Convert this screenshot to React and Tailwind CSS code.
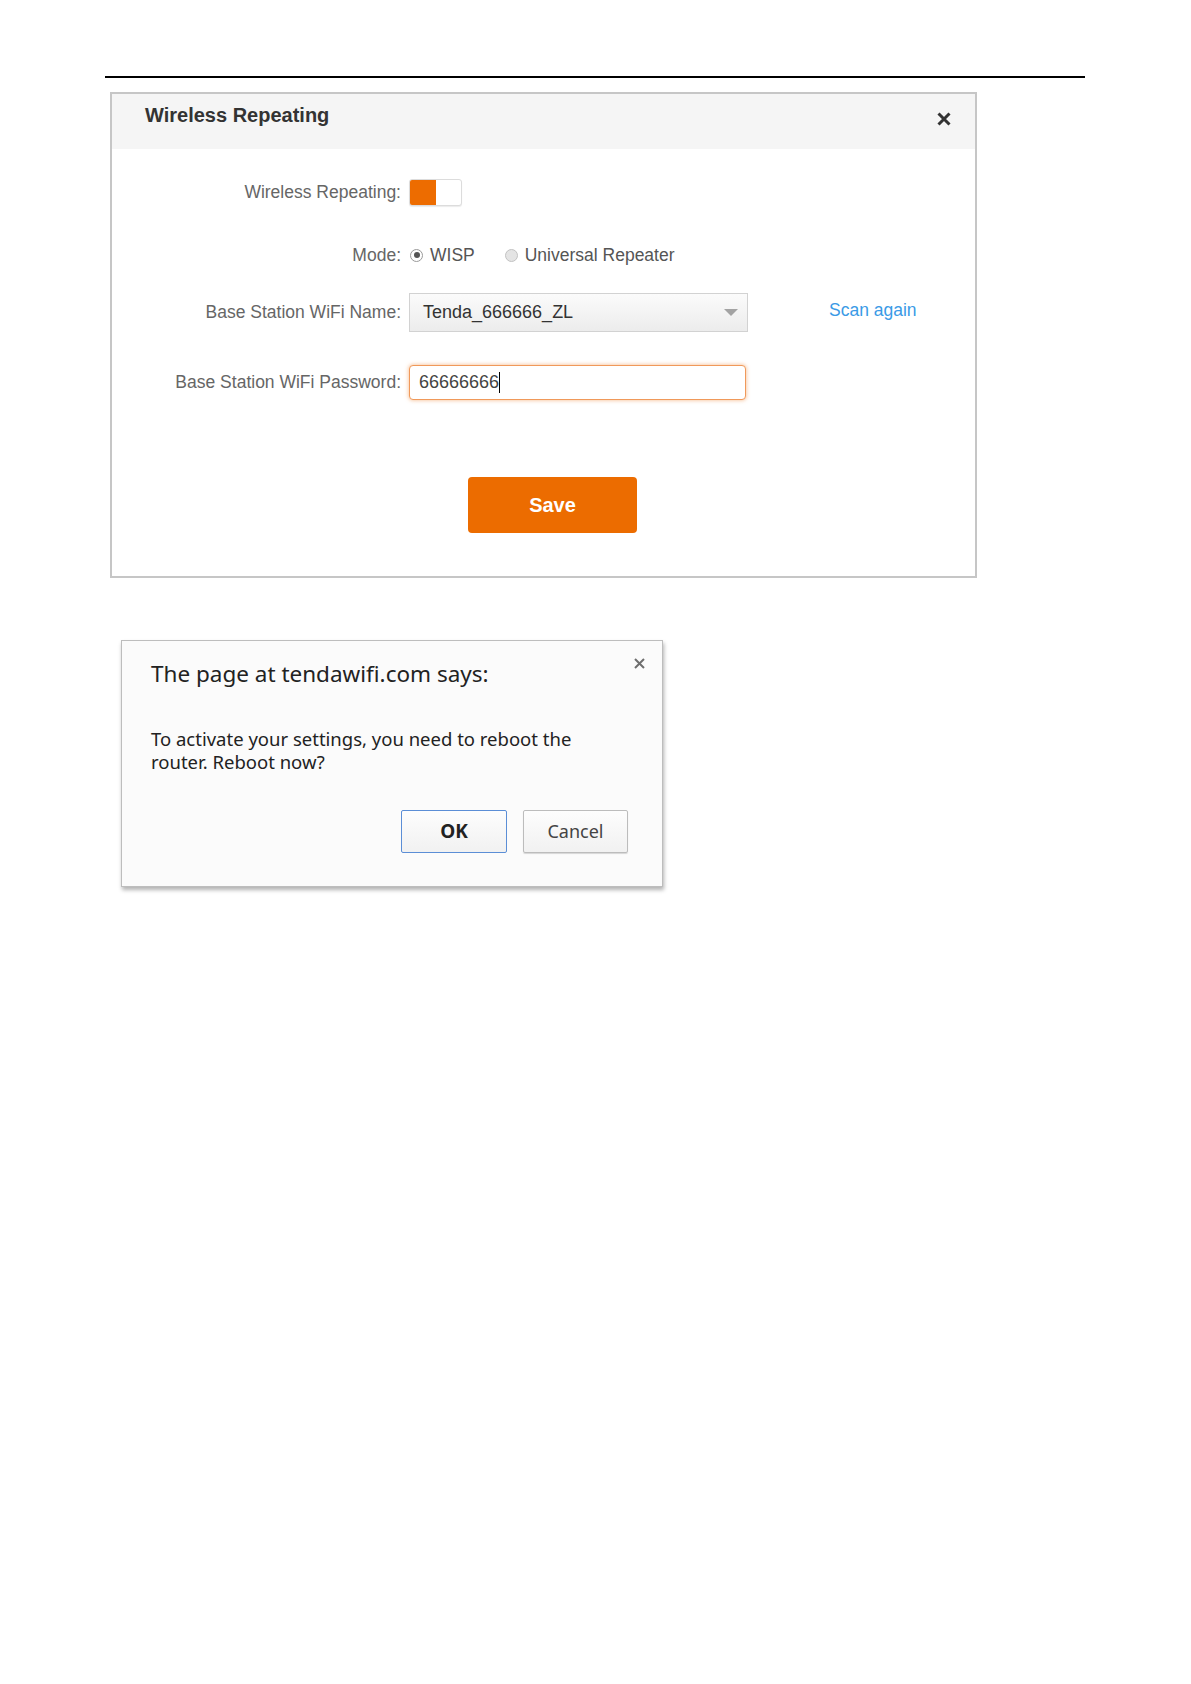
export default function App() {
  const arial = { fontFamily: '"Liberation Sans", Arial, sans-serif' };
  return (
    <div className="w-[1191px] min-h-[1684px] bg-white" style={arial}>
      <div className="pt-[76px] pl-[105px]">
        <div className="w-[980px] h-[2px] bg-black" />

        {/* Wireless Repeating panel */}
        <div className="ml-[5px] mt-[14px] w-[867px] border-2 border-[#c6c6c6] bg-white">
          <div className="h-[55px] bg-[#f5f5f5] pl-[33px] pr-[24px] pt-[9px] flex justify-between items-start">
            <div className="text-[20px] leading-[24px] font-bold text-[#333]">Wireless Repeating</div>
            <svg className="mt-[9px]" width="14" height="14" viewBox="0 0 14 14">
              <path d="M1.5 1.5 L12.5 12.5 M12.5 1.5 L1.5 12.5" stroke="#333" strokeWidth="3" strokeLinecap="butt" />
            </svg>
          </div>

          <div className="flex flex-col pb-[43px]">
            {/* Row 1 */}
            <div className="mt-[30px] h-[27px] flex items-center">
              <div className="w-[289px] text-right text-[17.5px] text-[#666]">Wireless Repeating:</div>
              <div className="ml-[8px] w-[53px] h-[27px] rounded-[3px] border border-[#dcdcdc] bg-white flex overflow-hidden shadow-[0_1px_1px_rgba(0,0,0,0.08)]">
                <div className="w-[26px] h-full bg-[#ed6c00]" />
              </div>
            </div>

            {/* Row 2 */}
            <div className="mt-[36px] h-[26px] flex items-center">
              <div className="w-[289px] text-right text-[17.5px] text-[#666]">Mode:</div>
              <div className="ml-[9px] w-[13px] h-[13px] rounded-full border border-[#9a9a9a] bg-white flex items-center justify-center">
                <div className="w-[6px] h-[6px] rounded-full bg-[#555]" />
              </div>
              <div className="ml-[7px] text-[17.5px] text-[#555]">WISP</div>
              <div className="ml-[30px] w-[13px] h-[13px] rounded-full border border-[#c2c2c2] bg-[#e4e4e4]" />
              <div className="ml-[7px] text-[17.5px] text-[#555]">Universal Repeater</div>
            </div>

            {/* Row 3 */}
            <div className="mt-[25px] h-[39px] flex items-center">
              <div className="w-[289px] text-right text-[17.5px] text-[#666]">Base Station WiFi Name:</div>
              <div className="ml-[8px] w-[339px] h-[39px] border border-[#d2d2d2] bg-gradient-to-b from-[#fbfbfb] to-[#ececec] flex items-center justify-between pl-[13px] pr-[9px]">
                <span className="text-[18px] text-[#333]">Tenda_666666_ZL</span>
                <svg width="14" height="7" viewBox="0 0 14 7">
                  <path d="M0 0 L14 0 L7 7 Z" fill="#a3a3a3" />
                </svg>
              </div>
              <div className="ml-[81px] -mt-[4px] text-[17.5px] text-[#3a9ae6]">Scan again</div>
            </div>

            {/* Row 4 */}
            <div className="mt-[33px] h-[35px] flex items-center">
              <div className="w-[289px] text-right text-[17.5px] text-[#666]">Base Station WiFi Password:</div>
              <div className="ml-[8px] w-[337px] h-[35px] rounded-[4px] border border-[#f0995a] shadow-[0_0_4px_rgba(237,120,30,0.55)] bg-white flex items-center pl-[9px]">
                <span className="text-[18px] text-[#444]">66666666</span>
                <span className="w-px h-[21px] bg-black" />
              </div>
            </div>

            {/* Save */}
            <div className="mt-[77px] ml-[356px] w-[169px] h-[56px] rounded-[4px] bg-[#ec6c00] flex items-center justify-center text-white font-bold text-[20px]">
              Save
            </div>
          </div>
        </div>

        {/* Browser dialog */}
        <div
          className="ml-[16px] mt-[62px] w-[542px] border border-[#bdbdbd] bg-[#fbfbfb] shadow-[1px_3px_4px_rgba(0,0,0,0.3)] pl-[29px] pr-[34px] pt-[19px] pb-[33px] flex flex-col"
          style={{ fontFamily: '"Noto Sans", "Open Sans", sans-serif' }}
        >
          <div className="flex justify-between items-start">
            <div className="text-[22.5px] leading-[28px] text-[#222]">The page at tendawifi.com says:</div>
            <svg className="-mt-[2px] -mr-[17px]" width="11" height="11" viewBox="0 0 11 11">
              <path d="M1 1 L10 10 M10 1 L1 10" stroke="#6e6e6e" strokeWidth="2" />
            </svg>
          </div>
          <div className="mt-[39px] text-[18.5px] leading-[23px] text-[#222] w-[450px]">
            To activate your settings, you need to reboot the router. Reboot now?
          </div>
          <div className="mt-[37px] flex justify-end gap-[16px]">
            <div className="w-[106px] h-[43px] rounded-[2px] border border-[#5b8ed6] bg-gradient-to-b from-[#fdfdfd] to-[#f1f1f1] flex items-center justify-center text-[19px] font-bold text-[#222]">
              OK
            </div>
            <div className="w-[105px] h-[43px] rounded-[2px] border border-[#bcbcbc] bg-gradient-to-b from-[#fdfdfd] to-[#f1f1f1] shadow-[0_1px_1px_rgba(0,0,0,0.15)] flex items-center justify-center text-[18px] text-[#444]">
              Cancel
            </div>
          </div>
        </div>
      </div>
    </div>
  );
}
